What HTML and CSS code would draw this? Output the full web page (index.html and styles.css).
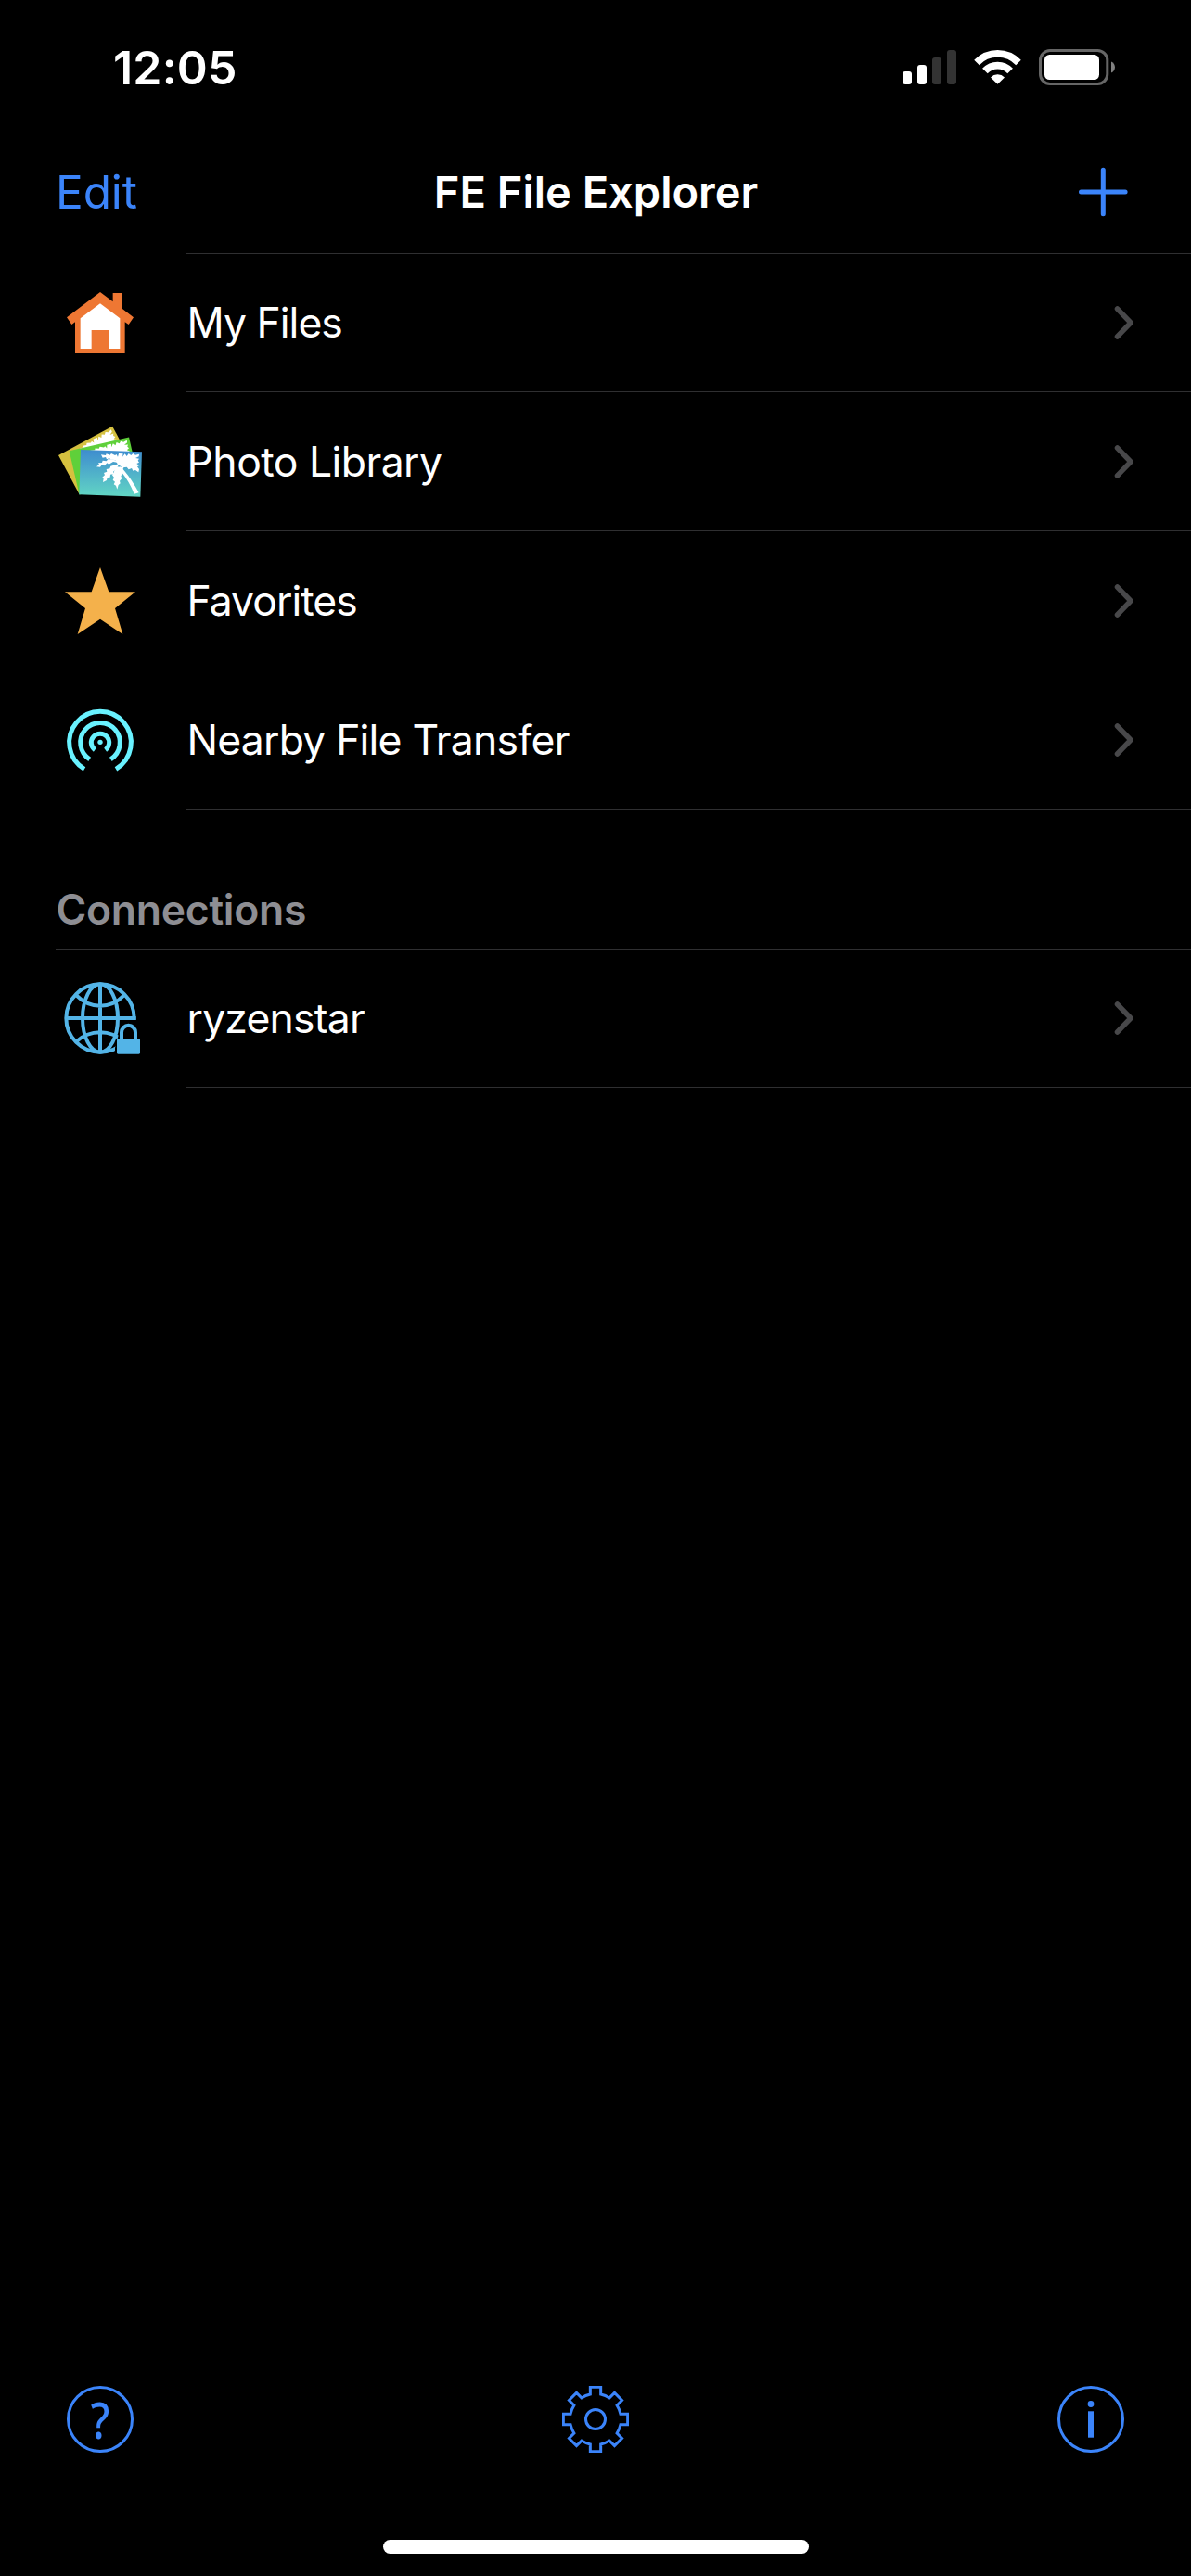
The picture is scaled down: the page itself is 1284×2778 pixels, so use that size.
FILE: index.html
```html
<!DOCTYPE html>
<html lang="en">
<head>
<meta charset="utf-8">
<title>FE File Explorer</title>
<link rel="stylesheet" href="styles.css">
</head>
<body>
<div class="screen">
  <div class="status-bar">
    <span class="time">12:05</span>
    <div class="indicators">
      <svg width="58" height="37" viewBox="0 0 58 37" fill="#fff">
        <rect x="0" y="23" width="10" height="14" rx="3"/>
        <rect x="16" y="16" width="10" height="21" rx="3"/>
        <rect x="32" y="8" width="10" height="29" rx="3" fill="#333"/>
        <rect x="48" y="0" width="10" height="37" rx="3" fill="#333"/>
      </svg>
      <svg width="51" height="37" viewBox="1050 54 51 37" fill="none" stroke="#fff">
        <path d="M1053 67.5a31.2 31.2 0 0 1 45 0" stroke-width="7.7"/>
        <path d="M1061.9 76.5a18.6 18.6 0 0 1 27.2 0" stroke-width="7.7"/>
        <path d="M1075.5 90.8L1068 83.4a10.8 10.8 0 0 1 15 0Z" fill="#fff" stroke="none"/>
      </svg>
      <svg width="82" height="39" viewBox="0 0 82 39">
        <rect x="1.5" y="1.5" width="72.3" height="36" rx="10.5" fill="none" stroke="#666" stroke-width="3"/>
        <rect x="6" y="6" width="59" height="27" rx="5.5" fill="#fff"/>
        <path d="M78 13.5c5.3 2.4 5.3 9.6 0 12Z" fill="#808080"/>
      </svg>
    </div>
  </div>

  <header class="nav-bar">
    <a class="edit">Edit</a>
    <h1 class="title">FE File Explorer</h1>
    <svg class="add" width="54" height="54" viewBox="0 0 54 54">
      <path d="M27.3 3.2v47.6M3.5 27h47.6"/>
    </svg>
  </header>

  <ul class="list">
    <li class="row">
      <svg class="icon" viewBox="60 30 288 288">
        <path fill="#ee7733" d="M204 75L245 106V78H273V127L312 157L296 180L284 172V273H123V172L112 180L96 157Z"/>
        <path fill="#fff" d="M204 112L268 160V258H233V198H176V258H140V160Z"/>
      </svg>
      <div class="cell"><span class="label tighter">My Files</span><svg class="chevron" viewBox="0 0 24 40"><path d="M4.5 5L19 20 4.5 35"/></svg></div>
    </li>
    <li class="row tall">
      <svg class="icon" viewBox="60 477 288 288">
        <defs>
          <linearGradient id="sky" x1="0" y1="0" x2="0" y2="1"><stop offset="0" stop-color="#3e8ccf"/><stop offset="1" stop-color="#62d6c4"/></linearGradient>
          <g id="palm" fill="#fff">
            <path d="M270 640Q300 670 329 724L314 728Q295 680 262 645Z"/>
            <path d="M262 634L252 618 238 617 234 612 225 616 222 609 212 611 207 601 222 603 224 598 236 602 240 597 252 603 257 600 261 608 264 597 278 598 276 608 284 598 290 606 296 597 304 603 310 597 318 602 330 599 329 607 318 612 330 614 326 620 330 626 322 630 330 636 324 640 330 648 328 658 318 651 310 653 306 645 296 649 290 641 278 643Z"/>
            <path d="M268 628L246 624 232 632 226 628 218 637 210 633 204 641 192 640 201 633 198 628 210 627 212 620 224 622 230 615 250 618Z"/>
            <path d="M266 630L254 650 246 656 246 664 237 665 236 674 227 675 225 684 213 690 215 679 211 674 219 667 216 660 226 656 224 648 235 646 238 638Z"/>
            <path d="M256 640L280 642 274 656 277 662 271 670 274 678 267 686 269 694 263 699 259 713 255 701 248 697 252 689 245 683 249 675 243 667 248 658Z"/>
          </g>
        </defs>
        <g transform="translate(69 603) rotate(-30.3) translate(-141 -585)">
          <path fill="#d5c03f" d="M141 585L339 592 334 730 136 725Z"/>
          <use href="#palm"/>
        </g>
        <g transform="translate(104 589) rotate(-14.9) translate(-141 -585)">
          <path fill="#5fd03a" d="M141 585L339 592 334 730 136 730Z"/>
          <use href="#palm"/>
        </g>
        <path fill="url(#sky)" d="M141 585L339 592 334 737 136 730Z"/>
        <use href="#palm"/>
      </svg>
      <div class="cell"><span class="label loose">Photo Library</span><svg class="chevron" viewBox="0 0 24 40"><path d="M4.5 5L19 20 4.5 35"/></svg></div>
    </li>
    <li class="row tall">
      <svg class="icon" viewBox="60 27 288 288">
        <path fill="#f4b14b" d="M204 66L232 145H318L252 198 277 282 204 233 131 282 156 198 90 145H176Z"/>
      </svg>
      <div class="cell"><span class="label tighter">Favorites</span><svg class="chevron" viewBox="0 0 24 40"><path d="M4.5 5L19 20 4.5 35"/></svg></div>
    </li>
    <li class="row tall">
      <svg class="icon" viewBox="60 477 288 288" fill="none" stroke="#69f2ff" stroke-width="15">
        <path d="M153 718A100 100 0 1 1 255 718"/>
        <path d="M170 686.5A64 64 0 1 1 238 686.5"/>
        <path d="M187 656A29 29 0 1 1 221 656"/>
        <circle cx="204" cy="631" r="8" fill="#69f2ff" stroke="none"/>
      </svg>
      <div class="cell"><span class="label">Nearby File Transfer</span><svg class="chevron" viewBox="0 0 24 40"><path d="M4.5 5L19 20 4.5 35"/></svg></div>
    </li>
  </ul>

  <h2 class="section">Connections</h2>
  <ul class="list flush">
    <li class="row">
      <svg class="icon" viewBox="60 360 288 288">
        <clipPath id="globe-clip"><path d="M60 360H348V510H268V540L252 600V648H60Z"/></clipPath>
        <g clip-path="url(#globe-clip)" fill="none" stroke="#53b4e7" stroke-width="12">
          <circle cx="204" cy="504" r="110"/>
          <ellipse cx="204" cy="504" rx="57" ry="110"/>
          <path d="M204 394V614M94 504H320M127 430Q160 464 204 464T281 430M127 580Q160 550 204 550T281 580"/>
        </g>
        <rect x="258" y="570" width="75" height="50" rx="4" fill="#53b4e7"/>
        <path d="M273 572V550a22.5 22.5 0 0 1 45 0V572" fill="none" stroke="#53b4e7" stroke-width="12"/>
      </svg>
      <div class="cell"><span class="label">ryzenstar</span><svg class="chevron" viewBox="0 0 24 40"><path d="M4.5 5L19 20 4.5 35"/></svg></div>
    </li>
  </ul>

  <footer class="toolbar">
    <div class="tool help"><span class="mark">?</span></div>
    <svg class="tool gear" viewBox="-108 -108 216 216">
      <path d="M-17-81V-104H17V-81A83 83 0 0 1 45.3-69.3L61.5-85.6 85.6-61.5 69.3-45.3A83 83 0 0 1 81-17H104V17H81A83 83 0 0 1 69.3 45.3L85.6 61.5 61.5 85.6 45.3 69.3A83 83 0 0 1 17 81V104H-17V81A83 83 0 0 1-45.3 69.3L-61.5 85.6-85.6 61.5-69.3 45.3A83 83 0 0 1-81 17H-104V-17H-81A83 83 0 0 1-69.3-45.3L-85.6-61.5-61.5-85.6-45.3-69.3A83 83 0 0 1-17-81Z"/>
      <circle r="31.5"/>
    </svg>
    <svg class="tool" viewBox="0 0 72 72">
      <circle cx="36" cy="36" r="34.5"/>
      <circle class="solid" cx="36" cy="19.5" r="3.4"/>
      <rect class="solid" x="33" y="27.3" width="6" height="28.4"/>
    </svg>
  </footer>
  <div class="home-indicator"></div>
</div>
</body>
</html>
```
FILE: styles.css
```css
* { box-sizing: border-box; }

body {
  margin: 0;
  background: #000;
  color: #fff;
  font-family: Inter, "Liberation Sans", sans-serif;
}

.screen {
  display: flex;
  flex-direction: column;
  width: 1284px;
  height: 2778px;
  overflow: hidden;
}

.status-bar {
  display: flex;
  align-items: center;
  justify-content: space-between;
  height: 141px;
  padding: 4px 82px 0 122px;
}

.time {
  font-size: 50px;
  font-weight: 600;
  letter-spacing: 0.2px;
}

.indicators {
  display: flex;
  align-items: center;
  gap: 19px;
}

.nav-bar {
  display: grid;
  grid-template-columns: 1fr auto 1fr;
  align-items: center;
  height: 132px;
  padding: 0 60px;
}

.edit {
  padding-bottom: 1px;
  color: #3b84fa;
  font-size: 49.5px;
  letter-spacing: -0.1px;
}

.title {
  margin: 0;
  padding: 0 0 2px 1px;
  font-size: 47px;
  font-weight: 600;
}

.add {
  justify-self: end;
  margin-right: 8px;
  fill: none;
  stroke: #3b84fa;
  stroke-width: 5;
  stroke-linecap: round;
}

.list {
  margin: 0;
  padding: 0;
  list-style: none;
}

.list::before {
  content: "";
  display: block;
  height: 1px;
  margin-left: 201px;
  background: #2f2f31;
}

.list.flush::before { margin-left: 60px; }

.row {
  display: flex;
  align-items: flex-start;
  gap: 45px;
  height: 149px;
  padding-left: 60px;
}

.row.tall { height: 150px; }

.icon {
  width: 96px;
  height: 96px;
  margin-top: 26px;
  flex: none;
}

.cell {
  display: flex;
  flex: 1;
  align-items: center;
  justify-content: space-between;
  height: 100%;
  padding: 0 60px 0 0.5px;
  border-bottom: 1px solid #2f2f31;
}

.label {
  font-size: 44.5px;
  letter-spacing: -0.8px;
}

.label.tighter { letter-spacing: -0.98px; }

.label.loose { letter-spacing: -0.55px; }

.chevron {
  width: 24px;
  height: 40px;
  fill: none;
  stroke: #48484a;
  stroke-width: 5.5;
  stroke-linecap: round;
  stroke-linejoin: round;
}

.section {
  display: flex;
  align-items: center;
  height: 150px;
  margin: 0;
  padding: 66px 60px 0 60.5px;
  color: #8e8e93;
  font-size: 44.5px;
  font-weight: 600;
  letter-spacing: -0.28px;
}

.toolbar {
  display: flex;
  justify-content: space-between;
  margin-top: auto;
  padding: 0 72px;
}

.tool {
  width: 72px;
  height: 72px;
  fill: none;
  stroke: #3b84fa;
  stroke-width: 3;
}

.tool.gear { stroke-width: 9; }

.solid {
  fill: #3b84fa;
  stroke: none;
}

.help {
  border: 3px solid #3b84fa;
  border-radius: 50%;
  color: #3b84fa;
  font: 500 54px/66px "Noto Sans", sans-serif;
  text-align: center;
}

.mark {
  display: inline-block;
  transform: scaleX(0.85);
}

.home-indicator {
  width: 459px;
  height: 15px;
  margin: 94px 0 24px 413px;
  border-radius: 8px;
  background: #fff;
}
```
